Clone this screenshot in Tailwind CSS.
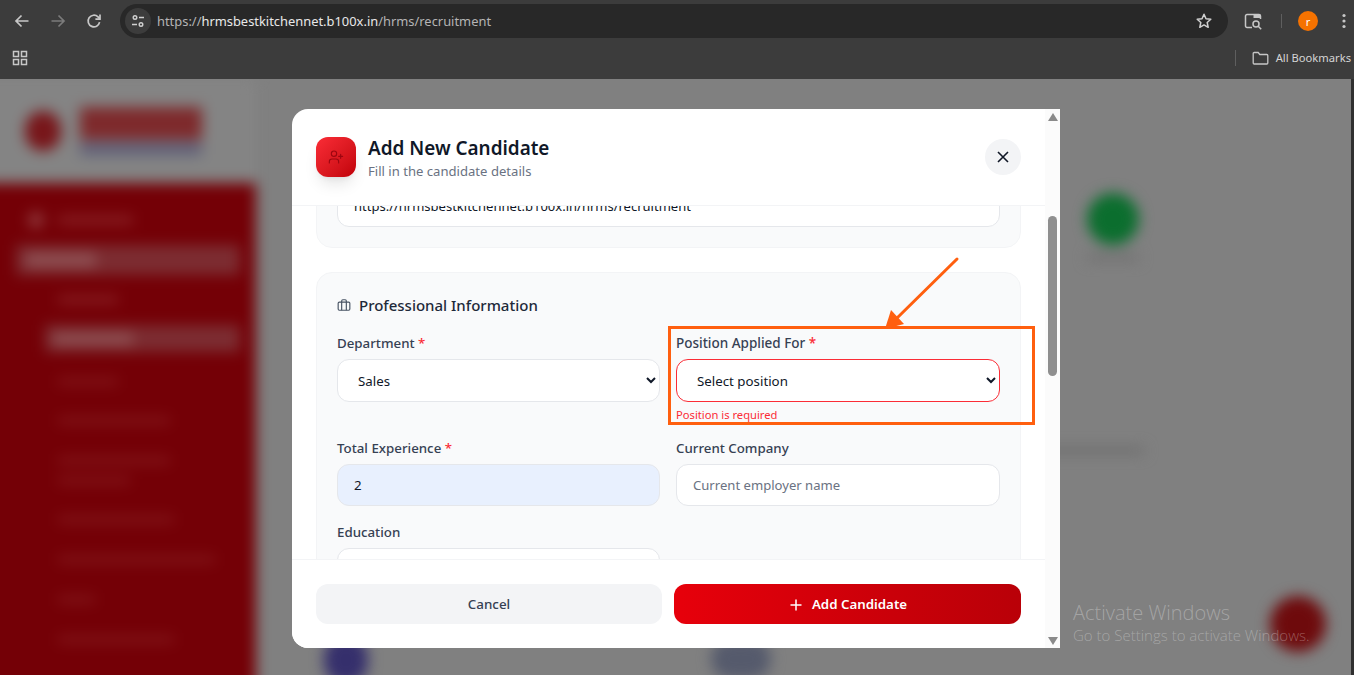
<!DOCTYPE html>
<html lang="en">
<head>
<meta charset="utf-8">
<title>Add New Candidate</title>
<script src="https://cdn.jsdelivr.net/npm/@tailwindcss/browser@4"></script>
</head>
<body class="m-0 overflow-hidden bg-[#808080] font-['Noto_Sans',sans-serif]">
<div class="relative flex h-[675px] w-[1354px] flex-col overflow-hidden">

  <!-- Browser chrome -->
  <header class="z-10 flex h-[79px] shrink-0 flex-col bg-[#3c3c3c] text-[#c7c7c7]">
    <div class="flex h-[42px] items-center">
      <div class="flex w-[120px] items-center pl-[13px]">
        <svg class="h-[18px] w-[18px]" viewBox="0 0 18 18" fill="none" stroke="#c7c7c7" stroke-width="1.7"><path d="M15.5 9H3M8.5 3.5 3 9l5.5 5.5"/></svg>
        <svg class="ml-[18px] h-[18px] w-[18px]" viewBox="0 0 18 18" fill="none" stroke="#7b7b7b" stroke-width="1.7"><path d="M2.5 9H15M9.5 3.5 15 9l-5.5 5.5"/></svg>
        <svg class="ml-[18px] h-[18px] w-[18px]" viewBox="0 0 18 18" fill="none" stroke="#c7c7c7" stroke-width="1.7"><path d="M14.6 10.2A5.8 5.8 0 1 1 13 4.9l1.7 1.7"/><path d="M15 2.5v4.6h-4.6" /></svg>
      </div>
      <div class="flex h-[34px] w-[1108px] items-center rounded-full bg-[#282828] pl-[5px] pr-[15px]">
        <span class="flex h-[26px] w-[26px] items-center justify-center rounded-full bg-[#3c3c3c]">
          <svg class="h-4 w-4" viewBox="0 0 16 16" fill="none" stroke="#d0d0d0" stroke-width="1.4"><circle cx="5" cy="4.5" r="1.8"/><path d="M9 4.5h5M2 11.5h5"/><circle cx="11" cy="11.5" r="1.8"/></svg>
        </span>
        <span class="ml-[6px] pt-px text-[12.900px] leading-none text-[#b4b4b4]">https://<span class="text-[#e8e8e8]">hrmsbestkitchennet.b100x.in</span>/hrms/recruitment</span>
        <svg class="ml-auto h-[18px] w-[18px]" viewBox="0 0 18 18" fill="none" stroke="#d0d0d0" stroke-width="1.5"><path d="m9 2.3 2 4.5 4.8.5-3.6 3.2 1 4.8L9 12.9l-4.2 2.4 1-4.8-3.6-3.2 4.8-.5z" stroke-linejoin="round"/></svg>
      </div>
      <div class="flex flex-1 items-center pl-[16px]">
        <svg class="h-[19px] w-[19px]" viewBox="0 0 19 19" fill="none" stroke="#c7c7c7" stroke-width="1.5"><path d="M8 15.5H3a1.5 1.5 0 0 1-1.5-1.5V4A1.500 1.500 0 0 1 3 2.500h12A1.500 1.500 0 0 1 16.500 4v3"/><path d="M9.500 3h6.500v3H9.500z" fill="#c7c7c7" stroke="none"/><circle cx="12" cy="12" r="3"/><path d="m14.200 14.200 3 3"/></svg>
        <span class="ml-[18px] h-[14px] w-px bg-[#5f5f5f]"></span>
        <span class="ml-[16px] flex h-5 w-5 items-center justify-center rounded-full bg-[#f57200] text-[11px] leading-none text-white">r</span>
        <svg class="ml-[20px] h-4 w-[12px]" viewBox="0 0 12 16" fill="#c7c7c7"><circle cx="6" cy="2.500" r="1.600"/><circle cx="6" cy="8" r="1.600"/><circle cx="6" cy="13.500" r="1.600"/></svg>
      </div>
    </div>
    <div class="flex h-[37px] items-center pb-[5px] pl-[12px]">
      <svg class="h-4 w-4" viewBox="0 0 16 16" fill="none" stroke="#c7c7c7" stroke-width="1.500"><rect x="1.500" y="1.500" width="5" height="5"/><rect x="9.500" y="1.500" width="5" height="5"/><rect x="1.500" y="9.500" width="5" height="5"/><rect x="9.500" y="9.500" width="5" height="5"/></svg>
      <span class="ml-auto h-[16px] w-px bg-[#5f5f5f]"></span>
      <svg class="ml-[16px] h-[16px] w-[17px]" viewBox="0 0 17 16" fill="none" stroke="#c7c7c7" stroke-width="1.300"><path d="M1.200 3.500A1 1 0 0 1 2.200 2.500h4l1.600 2h7a1 1 0 0 1 1 1v7.500a1 1 0 0 1-1 1H2.200a1 1 0 0 1-1-1z"/></svg>
      <span class="ml-[7px] mr-[3px] whitespace-nowrap text-[11.200px] leading-none text-[#d5d5d5]">All Bookmarks</span>
    </div>
  </header>

  <!-- Dimmed, blurred page behind the dialog -->
  <main class="relative flex-1 overflow-hidden bg-[#808080]">
    <div class="absolute -bottom-5 -left-5 right-0 top-0 flex blur-[7px]">
      <aside class="flex w-[276px] shrink-0 flex-col">
        <div class="flex h-[104px] items-center bg-[#848484] pl-[45px]">
          <span class="h-[40px] w-[36px] rounded-full bg-[#78161a]"></span>
          <div class="ml-[19px] flex w-[122px] flex-col gap-[3px]">
            <span class="h-[33px] bg-[#7e2a2c]"></span>
            <span class="h-[12px] bg-[#5e5e78]"></span>
          </div>
        </div>
        <nav class="flex flex-1 flex-col bg-[#740006] pl-5 pt-[29px]">
          <div class="ml-[28px] flex items-center gap-[14px]"><span class="h-4 w-4 rounded-full bg-[#90393d]"></span><span class="h-[8px] w-[75px] bg-[#8a2226]"></span></div>
          <div class="ml-[16px] mt-[17px] flex h-[30px] w-[224px] items-center bg-[#7c2c31] pl-[10px]"><span class="h-[14px] w-[70px] bg-[#8f5053]"></span></div>
          <span class="ml-[58px] mt-[21px] h-[7px] w-[60px] bg-[#8a2226]"></span>
          <div class="ml-[45px] mt-[22px] flex h-[27px] w-[195px] items-center bg-[#7c2c31] pl-[8px]"><span class="h-[12px] w-[80px] bg-[#8f5053]"></span></div>
          <span class="ml-[58px] mt-[26px] h-[7px] w-[60px] bg-[#83171b]"></span>
          <span class="ml-[58px] mt-[32px] h-[7px] w-[112px] bg-[#83171b]"></span>
          <span class="ml-[58px] mt-[33px] h-[7px] w-[112px] bg-[#83171b]"></span>
          <span class="ml-[58px] mt-[13px] h-[7px] w-[72px] bg-[#83171b]"></span>
          <span class="ml-[58px] mt-[32px] h-[7px] w-[116px] bg-[#83171b]"></span>
          <span class="ml-[58px] mt-[33px] h-[7px] w-[157px] bg-[#83171b]"></span>
          <span class="ml-[58px] mt-[33px] h-[7px] w-[37px] bg-[#83171b]"></span>
          <span class="ml-[58px] mt-[33px] h-[7px] w-[116px] bg-[#83171b]"></span>
        </nav>
      </aside>
      <!-- Free canvas of blurred page content -->
      <section class="relative flex-1">
        <span class="absolute left-[831px] top-[114px] h-[52px] w-[52px] rounded-full bg-[#0b6e2e]"></span>
        <span class="absolute left-[831px] top-[175px] h-[7px] w-[52px] bg-[#707070]"></span>
        <span class="absolute left-[788px] top-[368px] h-[7px] w-[100px] bg-[#6c6c6c]"></span>
        <span class="absolute left-[68px] top-[556px] h-[50px] w-[44px] rounded-full bg-[#352f6c]"></span>
        <span class="absolute left-[455px] top-[560px] h-[40px] w-[60px] rounded-full bg-[#555a6c]"></span>
        <span class="absolute left-[1014px] top-[517px] h-[56px] w-[56px] rounded-full bg-[#6e0a0c]"></span>
      </section>
    </div>
    <div class="absolute bottom-0 right-0 top-0 w-[3px] bg-[#303030]"></div>

    <!-- Windows watermark -->
    <div class="absolute left-[1073px] top-[521px] font-['Open_Sans',sans-serif] font-light text-white/30">
      <p class="text-[20px] leading-[25px]">Activate Windows</p>
      <p class="text-[15px] leading-[20px]">Go to Settings to activate Windows.</p>
    </div>

    <!-- Dialog -->
    <div class="absolute left-[292px] top-[30px] flex h-[539px] w-[768px] overflow-hidden rounded-l-2xl bg-white">
      <div class="flex w-[753px] flex-col">
        <div class="flex h-[97px] shrink-0 items-center border-b border-[#f3f4f6] px-6">
          <span class="flex h-10 w-10 items-center justify-center rounded-xl bg-gradient-to-br from-[#fb2c36] to-[#c10007] shadow-lg">
            <svg class="h-4 w-4" viewBox="0 0 24 24" fill="none" stroke="#9c0610" stroke-width="1.700" stroke-linecap="round" stroke-linejoin="round"><path d="M16 21v-2a4 4 0 0 0-4-4H6a4 4 0 0 0-4 4v2"/><circle cx="9" cy="7" r="4"/><path d="M19 8v6M22 11h-6"/></svg>
          </span>
          <div class="ml-3 flex flex-col">
            <h2 class="text-[18.900px] font-semibold leading-[28px] text-[#101828]">Add New Candidate</h2>
            <p class="text-[13.100px] leading-[18px] text-[#6a7282]">Fill in the candidate details</p>
          </div>
          <button class="ml-auto flex h-9 w-9 items-center justify-center rounded-full bg-[#f3f4f6]">
            <svg class="h-[20px] w-[20px]" viewBox="0 0 20 20" fill="none" stroke="#111827" stroke-width="1.600"><path d="m5 5 10 10M15 5 5 15"/></svg>
          </button>
        </div>

        <div class="min-h-0 flex-1 overflow-hidden px-6">
          <section class="mt-[-40px] rounded-2xl border border-[#f3f4f6] bg-[#f9fafb] px-5 pb-5 pt-[18px]">
            <input class="h-[42px] w-full rounded-xl border border-[#e5e7eb] bg-white px-4 text-[13px] text-[#101828]" value="https://hrmsbestkitchennet.b100x.in/hrms/recruitment">
          </section>
          <section class="mt-6 rounded-2xl border border-[#f3f4f6] bg-[#f9fafb] px-5 pt-5">
            <h3 class="mb-4 flex h-6 items-center text-[15px] font-medium leading-6 text-[#1e2939]">
              <svg class="mr-2 h-[14px] w-[14px]" viewBox="0 0 24 24" fill="none" stroke="#4a5565" stroke-width="2"><rect x="2" y="7" width="20" height="14" rx="2"/><path d="M16 21V5a2 2 0 0 0-2-2h-4a2 2 0 0 0-2 2v16"/></svg>
              Professional Information
            </h3>
            <div class="grid grid-cols-[323px_324px] gap-x-4 gap-y-4">
              <div>
                <label class="mb-[6px] block text-[13.300px] font-medium leading-5 text-[#364153]">Department <span class="text-[#fb2c36]">*</span></label>
                <select class="h-[43px] w-full rounded-xl border border-[#e5e7eb] bg-white px-4 text-[13.300px] text-[#101828]"><option>Sales</option></select>
              </div>
              <div>
                <label class="mb-[6px] block text-[13.500px] font-medium leading-5 text-[#364153]">Position Applied For <span class="text-[#fb2c36]">*</span></label>
                <select class="h-[43px] w-full rounded-xl border border-[#fb2c36] bg-white px-4 text-[13.300px] text-[#101828]"><option>Select position</option></select>
                <p class="-mb-px mt-[5px] text-[11.200px] leading-4 text-[#fb2c36]">Position is required</p>
              </div>
              <div>
                <label class="mb-[6px] block text-[13.300px] font-medium leading-5 text-[#364153]">Total Experience <span class="text-[#fb2c36]">*</span></label>
                <input class="h-[42px] w-full rounded-xl border border-[#e5e7eb] bg-[#e8f0fe] px-4 text-[13.300px] text-[#101828]" value="2">
              </div>
              <div>
                <label class="mb-[6px] block text-[13.300px] font-medium leading-5 text-[#364153]">Current Company</label>
                <input class="h-[42px] w-full rounded-xl border border-[#e5e7eb] bg-white px-4 text-[13.100px] text-[#101828] placeholder:text-[#6a7282]" placeholder="Current employer name">
              </div>
              <div>
                <label class="mb-[6px] block text-[13.300px] font-medium leading-5 text-[#364153]">Education</label>
                <input class="h-[42px] w-full rounded-xl border border-[#e5e7eb] bg-white px-4 text-[13.300px]">
              </div>
            </div>
          </section>
        </div>

        <div class="flex h-[89px] shrink-0 gap-3 border-t border-[#f3f4f6] bg-white px-6 pt-[24px]">
          <button class="h-10 w-[346px] rounded-xl bg-[#f3f4f6] text-[13.400px] font-medium text-[#364153]">Cancel</button>
          <button class="flex h-10 flex-1 items-center justify-center gap-2 rounded-xl bg-gradient-to-r from-[#e7000b] to-[#b90008] pt-px text-[13.300px] font-semibold text-white">
            <svg class="h-4 w-4" viewBox="0 0 16 16" fill="none" stroke="#fff" stroke-width="1.500"><path d="M8 2.500v11M2.500 8h11"/></svg>
            Add Candidate
          </button>
        </div>
      </div>

      <!-- Dialog scrollbar -->
      <div class="flex w-[15px] flex-col items-center bg-[#fbfbfb]">
        <svg class="mt-[4px] h-[8px] w-[10px]" viewBox="0 0 10 8" fill="#8a8a8a"><path d="M5 0l5 8H0z"/></svg>
        <span class="mt-[95px] h-[160px] w-[9px] rounded-full bg-[#8f8f8f]"></span>
        <svg class="mb-[3px] mt-auto h-[8px] w-[10px]" viewBox="0 0 10 8" fill="#8a8a8a"><path d="M0 0h10L5 8z"/></svg>
      </div>
    </div>

    <!-- Orange annotation -->
    <div class="absolute left-[668px] top-[247px] h-[99px] w-[367px] border-[3px] border-[#ff5f0f]"></div>
    <svg class="absolute left-[880px] top-[175px] h-[80px] w-[85px]" viewBox="0 0 85 80" fill="none">
      <path d="M77 5 15 66" stroke="#ff5f0f" stroke-width="3" stroke-linecap="round"/>
      <path d="M5 75 11 56 24 70z" fill="#ff5f0f"/>
    </svg>
  </main>
</div>
</body>
</html>
